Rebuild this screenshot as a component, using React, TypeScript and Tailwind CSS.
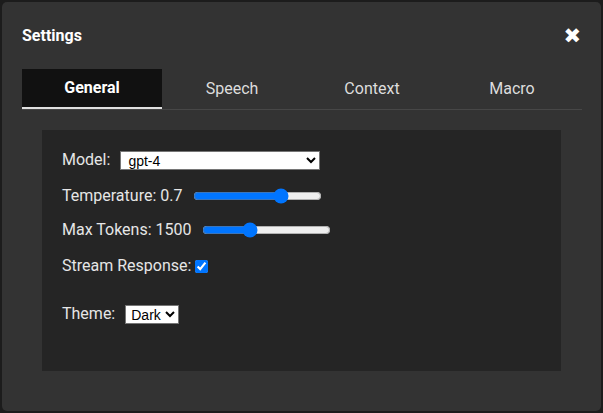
import { useState } from 'react';

const tabs = ['General', 'Speech', 'Context', 'Macro'];

export default function App() {
  const [active, setActive] = useState('General');
  const [temp, setTemp] = useState(0.7);
  const [tokens, setTokens] = useState(1500);
  const [stream, setStream] = useState(true);

  return (
    <div className="w-full h-screen bg-[#1c1c1c] p-[2px] font-['Roboto',sans-serif]">
      <div className="h-full bg-[#333333] rounded-[5px] px-5 pt-5 text-[#e6e6e6]">
        <div className="flex items-center justify-between h-[28px]">
          <h2 className="text-[16px] font-bold text-white">Settings</h2>
          <button className="text-white text-[21px] leading-none font-['DejaVu_Sans',sans-serif]">
            ✖
          </button>
        </div>

        <div className="mt-[19px] flex border-b border-[#474747] w-[560px]">
          {tabs.map(tab => (
            <button
              key={tab}
              onClick={() => setActive(tab)}
              className={
                tab === active
                  ? 'w-[140px] h-[40px] -mb-px bg-[#111111] border-b-2 border-[#e0e0e0] text-white font-bold text-[16px]'
                  : 'w-[140px] h-[40px] text-[#dddddd] text-[16px]'
              }
            >
              {tab}
            </button>
          ))}
        </div>

        <div className="mt-5 mx-5 h-[241px] bg-[#252525] p-5 text-[16px]">
          <div className="flex items-center h-5">
            <span>Model:</span>
            <select className="ml-[10px] w-[200px] h-[19px] bg-white text-black border border-[#767676] text-[14px] font-['Liberation_Sans',sans-serif] px-[3px]">
              <option>gpt-4</option>
              <option>gpt-3.5-turbo</option>
            </select>
          </div>
          <div className="flex items-center h-5 mt-4">
            <span>Temperature: {temp}</span>
            <input
              type="range"
              min={0}
              max={1}
              step={0.1}
              value={temp}
              onChange={e => setTemp(Number(e.target.value))}
              className="ml-[11px] w-[129px]"
            />
          </div>
          <div className="flex items-center h-5 mt-[14px]">
            <span>Max Tokens: {tokens}</span>
            <input
              type="range"
              min={100}
              max={4000}
              step={100}
              value={tokens}
              onChange={e => setTokens(Number(e.target.value))}
              className="ml-[10px] w-[129px]"
            />
          </div>
          <div className="flex items-center h-5 mt-4">
            <span>Stream Response:</span>
            <input
              type="checkbox"
              checked={stream}
              onChange={e => setStream(e.target.checked)}
              className="ml-[4px] w-[13px] h-[13px]"
            />
          </div>
          <div className="flex items-center h-5 mt-[28px]">
            <span>Theme:</span>
            <select className="ml-[10px] h-[19px] bg-white text-black border border-[#767676] text-[14px] font-['Liberation_Sans',sans-serif] pl-px">
              <option>Dark</option>
              <option>Light</option>
            </select>
          </div>
        </div>
      </div>
    </div>
  );
}
